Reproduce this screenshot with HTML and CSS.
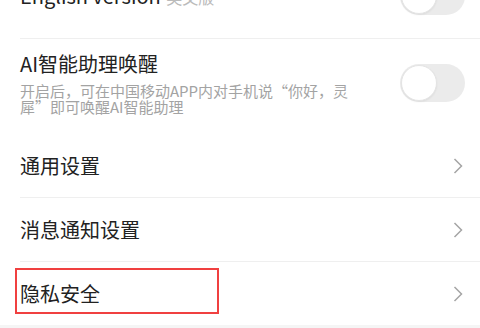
FILE: index.html
```html
<!DOCTYPE html>
<html lang="zh-CN">
<head>
  <meta charset="UTF-8">
  <meta name="viewport" content="width=device-width, initial-scale=1.0">
  <title>设置</title>
  <link rel="stylesheet" href="styles.css">
</head>
<body>
  <div class="settings">
    <div class="item item-top">
      <div class="item-text">
        <span class="item-title">English version</span>
        <span class="item-note">英文版</span>
      </div>
      <span class="switch"></span>
    </div>

    <div class="item item-tall">
      <div class="item-text">
        <div class="item-title">AI智能助理唤醒</div>
        <p class="item-desc">开启后，可在中国移动APP内对手机说“你好，灵犀”即可唤醒AI智能助理</p>
      </div>
      <span class="switch"></span>
    </div>

    <a href="#" class="item">
      <span class="item-title">通用设置</span>
      <svg class="arrow" width="10" height="16" viewBox="0 0 10 16"><polyline points="1.5,1 8.5,8 1.5,15" /></svg>
    </a>

    <a href="#" class="item">
      <span class="item-title">消息通知设置</span>
      <svg class="arrow" width="10" height="16" viewBox="0 0 10 16"><polyline points="1.5,1 8.5,8 1.5,15" /></svg>
    </a>

    <a href="#" class="item item-last">
      <span class="item-title">隐私安全</span>
      <svg class="arrow" width="10" height="16" viewBox="0 0 10 16"><polyline points="1.5,1 8.5,8 1.5,15" /></svg>
      <span class="highlight"></span>
    </a>
  </div>
</body>
</html>
```

FILE: styles.css
```css
body {
  font-family: "Noto Sans CJK SC", "Noto Sans", sans-serif;
  background-color: #f5f5f5;
  margin: 0;
  padding: 0;
  color: #222;
  overflow: hidden;
}

.settings {
  background-color: #fff;
  margin-top: -46px;
}

.item {
  position: relative;
  display: flex;
  align-items: center;
  justify-content: space-between;
  margin-left: 20px;
  padding-right: 15px;
  height: 63px;
  border-bottom: 1px solid #efefef;
  text-decoration: none;
  color: #222;
}

.item-top {
  height: 84px;
}

.item-tall {
  height: auto;
  padding-top: 11px;
  padding-bottom: 19px;
  border-bottom: none;
}

.item-last {
  border-bottom: none;
}

.item-text {
  flex: 1;
}

.item-title {
  font-size: 20px;
  line-height: 28px;
}

.item-note {
  font-size: 16px;
  color: #bbb;
  margin-left: 2px;
}

.item-desc {
  margin: 5px 0 0;
  max-width: 336px;
  font-size: 15px;
  line-height: 16px;
  color: #a3a3a3;
}

.switch {
  position: relative;
  flex-shrink: 0;
  width: 65px;
  height: 38px;
  border-radius: 19px;
  background-color: #ebebeb;
  margin-left: 20px;
}

.switch::after {
  content: "";
  position: absolute;
  left: 1px;
  top: 1px;
  width: 34px;
  height: 34px;
  border-radius: 50%;
  background-color: #fff;
  border: 1px solid #e4e4e4;
  box-shadow: 0 1px 2px rgba(0, 0, 0, 0.06);
}

.arrow {
  margin-right: 2px;
}

.arrow polyline {
  fill: none;
  stroke: #a5a5a5;
  stroke-width: 1.5;
}

.highlight {
  position: absolute;
  left: -5px;
  top: 6px;
  width: 204px;
  height: 46px;
  box-sizing: border-box;
  border: 2px solid #f04040;
}
```
